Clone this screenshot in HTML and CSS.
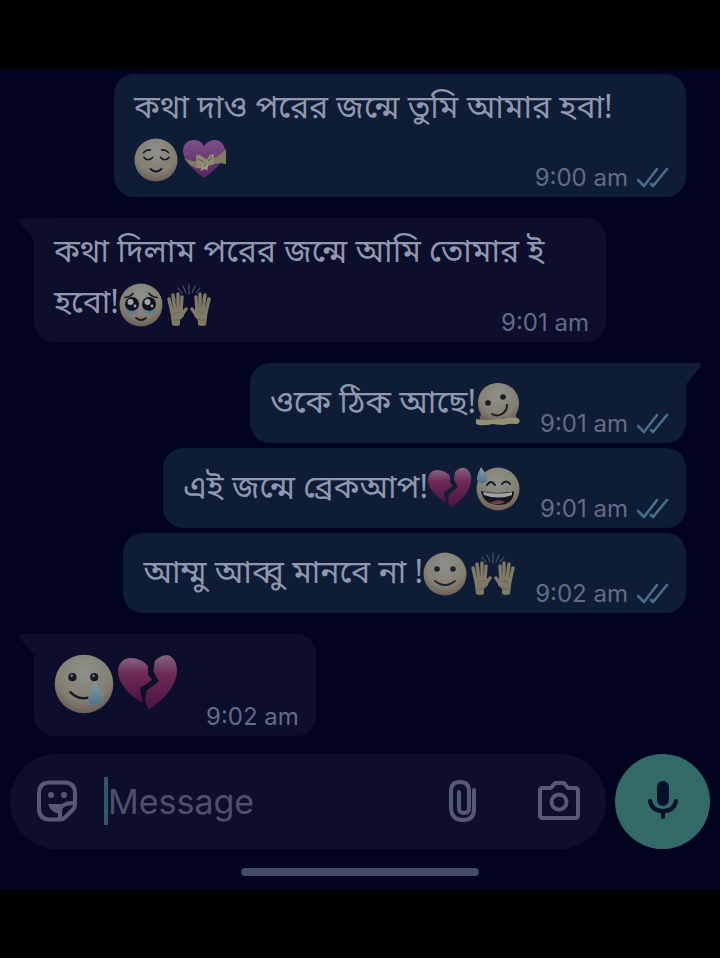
FILE: index.html
```html
<!DOCTYPE html>
<html lang="bn">

<head>
    <meta charset="UTF-8">
    <meta name="viewport" content="width=device-width, initial-scale=1.0">
    <title>Chat</title>
    <link rel="stylesheet" href="styles.css">
</head>

<body>
    <!-- shared emoji and icons -->
    <svg class="sprite" aria-hidden="true">
        <defs>
            <radialGradient id="skin" cx="50%" cy="30%" r="75%">
                <stop offset="0" stop-color="#8f908b" />
                <stop offset="0.65" stop-color="#827f71" />
                <stop offset="1" stop-color="#655650" />
            </radialGradient>
            <linearGradient id="red" x1="0" y1="0" x2="0" y2="1">
                <stop offset="0" stop-color="#86637f" />
                <stop offset="0.35" stop-color="#6d2a57" />
                <stop offset="1" stop-color="#4b1440" />
            </linearGradient>
            <linearGradient id="purple" x1="0" y1="0" x2="0" y2="1">
                <stop offset="0" stop-color="#7c5288" />
                <stop offset="1" stop-color="#592160" />
            </linearGradient>
            <linearGradient id="drop" x1="0" y1="0" x2="0" y2="1">
                <stop offset="0" stop-color="#889ba5" />
                <stop offset="1" stop-color="#4e7487" />
            </linearGradient>
        </defs>

        <symbol id="relieved" viewBox="0 0 44 44">
            <circle cx="22" cy="22" r="21.5" fill="url(#skin)" />
            <g fill="none" stroke="#161721" stroke-width="1.7" stroke-linecap="round">
                <path d="M9.500 14.500q3-3 7-2.500M27.500 12q4-.5 7 2.500" />
                <path d="M10 19.500q4 4.500 8.500 0M26.500 19.500q4 4.500 8.500 0" />
                <path d="M16.500 31q5.500 5 11 0" stroke-width="2" />
            </g>
        </symbol>

        <symbol id="gift-heart" viewBox="0 0 44 44">
            <path d="M22 40C12 33 1 22 1 13 1 5 7 2 12 2q7 0 10 6 4-6 11-6c6 0 10 5 10 11 0 10-11 20-21 27z" fill="url(#purple)" />
            <path d="M2 20q10 6 18 1l6 0q9 0 18-10v15q-10-2-18 2-9 5-16 0-5-3-8-8z" fill="#807a65" />
            <path d="M25 22q-9-8-11-4l1 12q6 1 9-5 4 4 8 1v-10q-5-1-7 6z" fill="#8d8a71" />
            <path d="M22 25l-4 8 5-2 2 2 2-8z" fill="#9a967f" />
            <path d="M16 21l6 3M30 19l-4 4M22 29l2-4" fill="none" stroke="#5b5646" />
        </symbol>

        <symbol id="teary" viewBox="0 0 44 44">
            <circle cx="22" cy="22" r="21.5" fill="url(#skin)" />
            <g fill="none" stroke="#1b1924" stroke-width="1.700" stroke-linecap="round">
                <path d="M6 14.500q5-.5 8-4M38 14.500q-5-.5-8-4M17 35q5 4 10 0" />
            </g>
            <circle cx="13" cy="21" r="7" fill="#10121e" />
            <circle cx="30" cy="21" r="7" fill="#10121e" />
            <circle cx="11.500" cy="19" r="3" fill="#a1a5b1" />
            <circle cx="28.500" cy="19" r="3" fill="#a1a5b1" />
            <circle cx="16" cy="23" r="1.400" fill="#a1a5b1" />
            <circle cx="33" cy="23" r="1.400" fill="#a1a5b1" />
            <path d="M6 26q6 4 13 0l-1 4q-6 2-11 0zM24 26q7 4 13 0l-1 4q-5 2-11 0z" fill="#587f93" />
        </symbol>

        <symbol id="hands" viewBox="0 0 44 44">
            <g stroke="#45506a" stroke-width="1.200" stroke-linecap="round">
                <path d="M22 1v10M16 3l3 7M28 3l-3 7M11 5l4 5M33 5l-4 5" />
            </g>
            <g id="one-hand">
                <path d="M2 16l3 13M6 12l2 16M11 11v17M15 14l-1 14M19 26l-5 7" fill="none" stroke="#7f7a67" stroke-width="3.400" stroke-linecap="round" />
                <path d="M3 25l13 1 1 7-4 4v5q-4 2-8 0l-1-8z" fill="#7f7a67" />
                <path d="M4.300 18l1.700 7M8.600 15l1 9M13 16v8M7 31q3-3 7-2M6 37q4 1 7-1" fill="none" stroke="#5f594f" stroke-width=".7" />
            </g>
            <use href="#one-hand" transform="matrix(-1 0 0 1 44 0)" />
        </symbol>

        <symbol id="melting" viewBox="0 0 44 44">
            <path d="M22 1C10 1 2 10 2 21q0 7 3 11l-2 7 18 3 20-2-1-8q3-4 3-11C43 10 34 1 22 1z" fill="url(#skin)" />
            <path d="M0 37q4 1 9 1 7 0 12-1 6 1 10-1 5-1 11 0 4 4-1 6-7-1-13 1-6 0-11-1-8 2-14 1-5-1-3-6z" fill="#92906e" />
            <circle cx="12" cy="21" r="2.800" fill="#1a1a22" />
            <circle cx="27" cy="15" r="2.800" fill="#1a1a22" />
            <path d="M16 32q5 3 10 0 5-3 5-9" fill="none" stroke="#1a1a22" stroke-width="2" stroke-linecap="round" />
        </symbol>

        <symbol id="broken-heart" viewBox="0 0 44 44">
            <path d="M18 36C8 30 0 21 0 13 0 6 5 3 9 3q8 0 13 6l0 6 3 4-9 6z" fill="url(#red)" />
            <path d="M22 41l-2-7 1-7 9-7-4-7 1-8q5-5 10-4c5 2 7 8 6 14-2 11-11 20-21 26z" fill="url(#red)" />
        </symbol>

        <symbol id="sweat" viewBox="0 0 44 44">
            <circle cx="22" cy="22" r="21.500" fill="url(#skin)" />
            <path d="M11 18q4-6 8 0M26 17q4-5 8 0" fill="none" stroke="#1a1a22" stroke-width="2" stroke-linecap="round" />
            <path d="M5 24q17 4 33 0 0 14-16 14Q7 37 5 24z" fill="#17151f" />
            <path d="M7 25q15 3 29 0v3q-14 5-28 0z" fill="#a1a2a4" />
            <path d="M14 36q8-5 15-1-7 4-15 1z" fill="#70424f" />
            <path d="M5 0q7 9 6 13-2 4-6 3-5-1-4-6 1-4 4-10z" fill="url(#drop)" />
        </symbol>

        <symbol id="smile" viewBox="0 0 44 44">
            <circle cx="22" cy="22" r="21.500" fill="url(#skin)" />
            <circle cx="14" cy="17" r="2.800" fill="#20202a" />
            <circle cx="30" cy="17" r="2.800" fill="#20202a" />
            <path d="M12 29q10 8 20 0" fill="none" stroke="#20202a" stroke-width="1.800" stroke-linecap="round" />
        </symbol>

        <symbol id="tear" viewBox="0 0 44 44">
            <circle cx="22" cy="22" r="21.500" fill="url(#skin)" />
            <circle cx="13.500" cy="17" r="3" fill="#191a24" />
            <circle cx="29.500" cy="17" r="3" fill="#191a24" />
            <circle cx="13" cy="16" r=".9" fill="#7f8085" />
            <circle cx="29" cy="16" r=".9" fill="#7f8085" />
            <path d="M12 28q6 6 13 4" fill="none" stroke="#191a24" stroke-width="1.800" stroke-linecap="round" />
            <path d="M30 20q7 10 6 14-2 4-6 4-5-1-5-5 0-4 5-13z" fill="url(#drop)" />
        </symbol>

        <symbol id="ticks" viewBox="0 0 32 22">
            <path d="M1 13l6 6L20 2M14 17l2 2L30 2" fill="none" stroke="#476f8b" stroke-width="2.600" stroke-linecap="round" stroke-linejoin="round" />
        </symbol>
    </svg>

    <div class="screen">
        <main class="messages">
            <div class="message sent long">
                <p class="text">কথা দাও পরের জন্মে তুমি আমার হবা!<br><svg class="emoji"><use href="#relieved" /></svg><svg class="emoji"><use href="#gift-heart" /></svg></p>
                <div class="meta"><time>9:00 am</time><svg class="ticks"><use href="#ticks" /></svg></div>
            </div>

            <div class="message received long tail first">
                <p class="text">কথা দিলাম পরের জন্মে আমি তোমার ই<br>হবো!<svg class="emoji"><use href="#teary" /></svg><svg class="emoji"><use href="#hands" /></svg></p>
                <div class="meta"><time>9:01 am</time></div>
            </div>

            <div class="message sent tail first">
                <p class="text">ওকে ঠিক আছে!<svg class="emoji"><use href="#melting" /></svg></p>
                <div class="meta"><time>9:01 am</time><svg class="ticks"><use href="#ticks" /></svg></div>
            </div>

            <div class="message sent">
                <p class="text">এই জন্মে ব্রেকআপ!<svg class="emoji"><use href="#broken-heart" /></svg><svg class="emoji"><use href="#sweat" /></svg></p>
                <div class="meta"><time>9:01 am</time><svg class="ticks"><use href="#ticks" /></svg></div>
            </div>

            <div class="message sent">
                <p class="text">আম্মু আব্বু মানবে না !<svg class="emoji"><use href="#smile" /></svg><svg class="emoji"><use href="#hands" /></svg></p>
                <div class="meta"><time>9:02 am</time><svg class="ticks"><use href="#ticks" /></svg></div>
            </div>

            <div class="message received tail first big">
                <p class="text"><svg class="emoji"><use href="#tear" /></svg><svg class="emoji"><use href="#broken-heart" /></svg></p>
                <div class="meta"><time>9:02 am</time></div>
            </div>
        </main>

        <form class="composer">
            <div class="field">
                <button type="button" class="icon-button" aria-label="Stickers">
                    <svg viewBox="0 0 42 42">
                        <path d="M14 2.500h14q11 0 11 11v11q0 3-2 5l-8 8q-2 2-5 2H14q-11 0-11-11v-15q0-11 11-11z" />
                        <path d="M38 23q-7 0-10 2-4 2-4 6v7" />
                        <path class="solid" d="M12 24h17l-5 10q-9-1-12-10z" />
                        <circle class="solid" cx="15" cy="15" r="3" />
                        <circle class="solid" cx="28" cy="15" r="3" />
                    </svg>
                </button>
                <span class="caret"></span>
                <input type="text" class="input" placeholder="Message" aria-label="Message">
                <button type="button" class="icon-button" aria-label="Attach">
                    <svg viewBox="0 0 42 42">
                        <path d="M32 10v19q0 11-11 11T9 29V11q0-9 9-9t9 9v17q0 5-5 5t-5-5V12" />
                    </svg>
                </button>
                <button type="button" class="icon-button camera" aria-label="Camera">
                    <svg viewBox="0 0 42 42">
                        <path d="M4 8h9l4-5h9l4 5h7q3 0 3 3v24q0 3-3 3H5q-3 0-3-3V11q0-3 2-3z" />
                        <circle cx="21" cy="22" r="7.500" />
                    </svg>
                </button>
            </div>
            <button type="button" class="mic" aria-label="Record voice message">
                <svg viewBox="0 0 32 42">
                    <rect x="10" y="1" width="12" height="25" rx="6" />
                    <path d="M3 21q2 10 13 10t13-10M16 31v6" />
                </svg>
            </button>
        </form>

        <div class="home-bar"></div>
    </div>
</body>

</html>
```
FILE: styles.css
```css
* {
    box-sizing: border-box;
}

body {
    margin: 0;
    padding: 69px 0;
    background-color: #000;
    color: #9098af;
    font-family: Inter, "Noto Sans Bengali", "Noto Sans", sans-serif;
}

.sprite {
    position: absolute;
    width: 0;
    height: 0;
}

.screen {
    padding-bottom: 14px;
    background-color: #02031f;
}

.messages {
    display: flex;
    flex-direction: column;
    gap: 5px;
    padding: 5px 34px 18px;
}

.message {
    position: relative;
    display: flex;
    align-items: flex-end;
    gap: 16px;
    max-width: 572px;
    min-height: 80px;
    padding: 12px 17px 6px 20px;
    border-radius: 20px;
}

.sent {
    align-self: flex-end;
    background-color: #0f1c35;
}

.received {
    align-self: flex-start;
    background-color: #0c0e2c;
}

.first {
    margin-top: 16px;
}

/* Text and time share one cell so the time sits beside the last line */
.long {
    display: grid;
    width: 100%;
    padding-top: 6px;
}

.long .text,
.long .meta {
    grid-area: 1 / 1;
}

.long .text {
    margin-bottom: 9px;
}

.long .meta {
    align-self: end;
    justify-self: end;
}

/* Corner that points at the sender */
.tail::before {
    content: "";
    position: absolute;
    top: 0;
    width: 36px;
    height: 22px;
    background-color: inherit;
}

.sent.tail::before {
    right: -15px;
    clip-path: polygon(0 0, 100% 0, 98% 18%, 58% 100%, 0 100%);
}

.received.tail::before {
    left: -15px;
    clip-path: polygon(0 0, 100% 0, 100% 100%, 42% 100%, 2% 18%);
}

.text {
    margin: 0;
    align-self: flex-start;
    font-family: "Noto Sans", "Noto Sans Bengali", sans-serif;
    font-size: 32px;
    line-height: 51px;
}

.emoji {
    width: 44px;
    height: 44px;
    margin-right: 4px;
    vertical-align: middle;
}

.big {
    gap: 24px;
    min-height: 102px;
    padding-top: 20px;
}

.big .text {
    line-height: 0;
}

.big .emoji {
    width: 60px;
    height: 60px;
}

.meta {
    display: flex;
    align-items: center;
    gap: 9px;
    color: #626b88;
    font-size: 24px;
    line-height: 26px;
    white-space: nowrap;
}

.ticks {
    width: 32px;
    height: 22px;
}

.composer {
    display: flex;
    gap: 9px;
    padding: 0 10px;
}

.field {
    display: flex;
    flex: 1;
    align-items: center;
    min-width: 0;
    height: 95px;
    padding: 0 26px;
    border-radius: 48px;
    background-color: #0c0e2c;
}

.icon-button {
    width: 42px;
    height: 42px;
    padding: 0;
    border: 0;
    background: none;
}

.icon-button svg {
    display: block;
    fill: none;
    stroke: #555878;
    stroke-width: 4;
    stroke-linecap: round;
    stroke-linejoin: round;
}

.icon-button .solid {
    fill: #555878;
    stroke: none;
}

.camera {
    margin-left: 54px;
}

.caret {
    width: 4px;
    height: 48px;
    margin-left: 26px;
    background-color: #2d5a68;
}

.input {
    flex: 1;
    min-width: 0;
    padding: 0;
    border: 0;
    outline: none;
    background: none;
    color: #9098af;
    font-family: Inter, "Noto Sans Bengali", sans-serif;
    font-size: 34px;
}

.input::placeholder {
    color: #4c4f6e;
    opacity: 1;
}

.mic {
    display: grid;
    place-items: center;
    width: 95px;
    height: 95px;
    padding: 0;
    border: 0;
    border-radius: 50%;
    background-color: #316a67;
}

.mic svg {
    width: 32px;
    height: 42px;
    fill: #03102a;
}

.mic path {
    fill: none;
    stroke: #03102a;
    stroke-width: 4;
    stroke-linecap: round;
}

.home-bar {
    width: 33%;
    height: 8px;
    margin: 19px auto 0;
    border-radius: 4px;
    background-color: #454b68;
}
```
